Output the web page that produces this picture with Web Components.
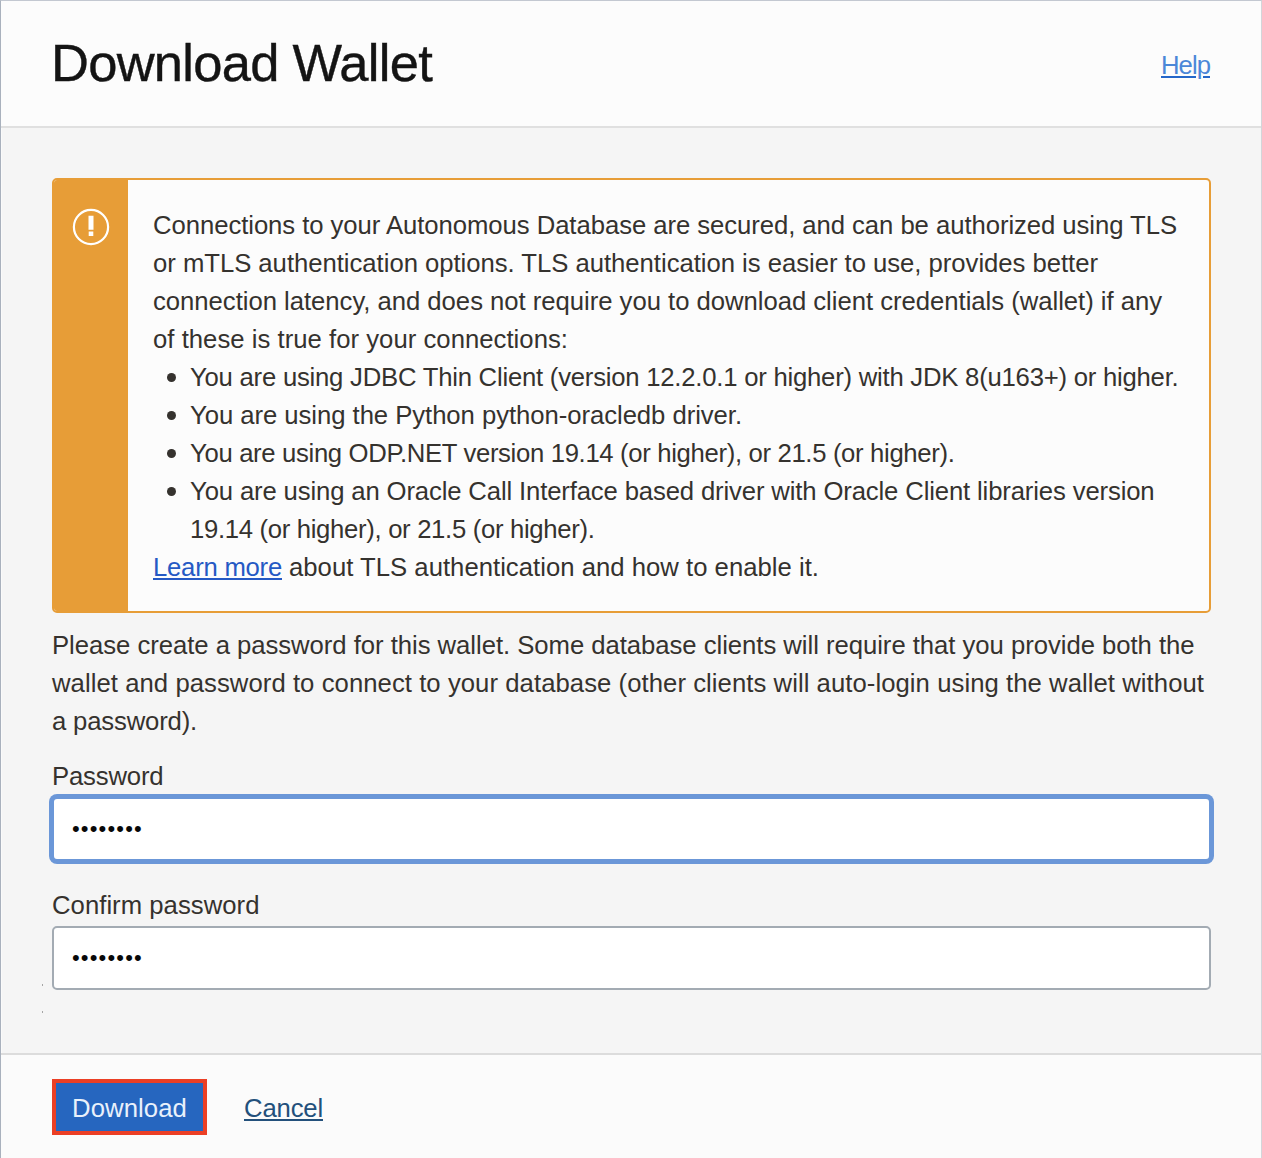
<!DOCTYPE html>
<html lang="en">
<head>
<meta charset="utf-8">
<title>Download Wallet</title>
<style>
  html, body { margin: 0; height: 100%; }
  body { font-family: "Liberation Sans", Arial, sans-serif; font-size: 25.7px; line-height: 38px; color: #35322e; background: #f5f5f5; }
</style>
</head>
<body>
<wallet-dialog>
  <dialog-header slot="header">
    <text-line width="381">Download Wallet</text-line>
    <text-link slot="action" kind="help"><text-line width="49">Help</text-line></text-link>
  </dialog-header>

  <warning-callout>
    <div><text-line width="1024">Connections to your Autonomous Database are secured, and can be authorized using TLS</text-line></div>
    <div><text-line width="945">or mTLS authentication options. TLS authentication is easier to use, provides better</text-line></div>
    <div><text-line width="1009">connection latency, and does not require you to download client credentials (wallet) if any</text-line></div>
    <div><text-line width="415">of these is true for your connections:</text-line></div>
    <bullet-item><text-line width="988.5">You are using JDBC Thin Client (version 12.2.0.1 or higher) with JDK 8(u163+) or higher.</text-line></bullet-item>
    <bullet-item><text-line width="552">You are using the Python python-oracledb driver.</text-line></bullet-item>
    <bullet-item><text-line width="764.5">You are using ODP.NET version 19.14 (or higher), or 21.5 (or higher).</text-line></bullet-item>
    <bullet-item><text-line width="964.5">You are using an Oracle Call Interface based driver with Oracle Client libraries version</text-line><br><text-line width="404.5">19.14 (or higher), or 21.5 (or higher).</text-line></bullet-item>
    <div style="display:flex;gap:7px"><text-link kind="learn"><text-line width="129">Learn more</text-line></text-link><text-line width="530">about TLS authentication and how to enable it.</text-line></div>
  </warning-callout>

  <help-text>
    <text-line width="1142.5">Please create a password for this wallet. Some database clients will require that you provide both the</text-line>
    <text-line width="1152">wallet and password to connect to your database (other clients will auto-login using the wallet without</text-line>
    <text-line width="145">a password).</text-line>
  </help-text>

  <password-field focused><text-line slot="label" width="111.5">Password</text-line><text-line width="71">••••••••</text-line></password-field>
  <password-field><text-line slot="label" width="207.5">Confirm password</text-line><text-line width="71">••••••••</text-line></password-field>

  <action-button slot="footer"><text-line width="115">Download</text-line></action-button>
  <text-link slot="footer" kind="cancel"><text-line width="79">Cancel</text-line></text-link>
</wallet-dialog>

<script>
function component(name, html, setup) {
  const template = document.createElement('template');
  template.innerHTML = html;
  customElements.define(name, class extends HTMLElement {
    connectedCallback() {
      if (!this.shadowRoot) {
        this.attachShadow({ mode: 'open' }).append(template.content.cloneNode(true));
      }
      if (setup) setup(this);
    }
  });
}

component('wallet-dialog', `
  <style>
    :host { display: flex; flex-direction: column; box-sizing: border-box; width: 100%; height: 1158px; overflow: hidden;
      border: solid; border-width: 1px 1px 0 1px; border-color: #c3c8d1 #d3d5d9 #c3c8d1 #a9b1bd; background: #f5f5f5; }
    main { flex: 1; min-height: 0; padding: 50px 50px 0 51px; box-shadow: inset 1px 0 #fafafa; }
    footer { box-sizing: border-box; height: 105px; display: flex; align-items: flex-start; gap: 37px;
      padding: 24px 51px 0; border-top: 2px solid #dcdcdc; background: #fbfbfb; }
    i { position: absolute; left: 42px; width: 1px; height: 2px; background: #a5a5a5; }
  </style>
  <slot name="header"></slot>
  <main><slot></slot></main>
  <footer><slot name="footer"></slot></footer>
  <i style="top:984px"></i><i style="top:1011px"></i>`);

component('dialog-header', `
  <style>
    :host { display: flex; align-items: center; justify-content: space-between; box-sizing: border-box; height: 127px;
      padding: 0 51px 0 50px; border-bottom: 2px solid #e0e0e0; background: #fcfcfc; }
    h1 { margin: 0 0 2px; font-size: 52.5px; line-height: 60px; font-weight: 400; color: #141414; -webkit-text-stroke: .4px #141414; }
  </style>
  <h1><slot></slot></h1><slot name="action"></slot>`);

component('text-link', `
  <style>
    :host { display: block; }
    a { display: block; }
    ::slotted(text-line) { text-decoration: underline 2px; text-underline-offset: 2px; }
    :host([kind="learn"]) a { color: #2559c4; }
    :host([kind="help"]) a { color: #4b87d8; margin-top: 2px; }
    :host([kind="help"]) ::slotted(text-line) { text-decoration-color: #2466c9; }
    :host([kind="cancel"]) a { color: #23507b; margin-top: 10px; }
  </style>
  <a><slot></slot></a>`);

component('warning-callout', `
  <style>
    :host { display: flex; box-sizing: border-box; height: 435px; border: 2px solid #e79d37; border-radius: 5px; background: #fcfcfc; overflow: hidden; }
    aside { width: 74px; background: #e79d37; }
    svg { display: block; margin: 28px 0 0 18px; }
    section { padding: 26px 0 0 25px; white-space: nowrap; }
  </style>
  <aside>
    <svg width="38" height="38" viewBox="0 0 38 38">
      <circle cx="19" cy="19" r="17.1" fill="none" stroke="#fff" stroke-width="2.2"/>
      <path d="M16.5 7.7h5v14h-5zM16.7 23.6h4.6v4.5h-4.6z" fill="#fff"/>
    </svg>
  </aside>
  <section><slot></slot></section>`);

component('bullet-item', `
  <style>
    :host { display: flex; }
    span { width: 9px; height: 9px; margin: 15px 14px 0; border-radius: 50%; background: #35322e; }
  </style>
  <span></span><div><slot></slot></div>`);

component('help-text', `
  <style>:host { display: flex; flex-direction: column; align-items: flex-start; margin-top: 13px; }</style>
  <slot></slot>`);

component('password-field', `
  <style>
    :host { display: block; margin-top: 17px; }
    label { display: block; height: 40px; }
    .box { display: flex; align-items: center; box-sizing: border-box; height: 64px; padding: 0 0 0 18px;
      border: 2px solid #a3abb3; border-radius: 5px; background: #fff; color: #080808; font-size: 22px; }
    :host([focused]) .box { border-color: #6b97d8; box-shadow: 0 0 0 3px #6b97d8; }
    :host([focused]) { margin-bottom: 25px; }
  </style>
  <label><slot name="label"></slot></label>
  <div class="box"><slot></slot></div>`);

component('action-button', `
  <style>
    :host { display: block; }
    button { display: flex; align-items: center; justify-content: center; box-sizing: border-box; width: 155px; height: 56px;
      padding: 2px 0 0; border: 4px solid #eb3f25; background: #2666bf; color: #e9f1fb; font: inherit; }
  </style>
  <button><slot></slot></button>`);

/* One line of text whose tracking is spread so that it fills its measure. */
component('text-line', `
  <style>:host { display: inline-block; white-space: nowrap; vertical-align: top; }</style>
  <slot></slot>`, host => {
    const count = host.textContent.length;
    const natural = host.getBoundingClientRect().width;
    host.style.letterSpacing = (Number(host.getAttribute('width')) - natural) / count + 'px';
  });
</script>
</body>
</html>
